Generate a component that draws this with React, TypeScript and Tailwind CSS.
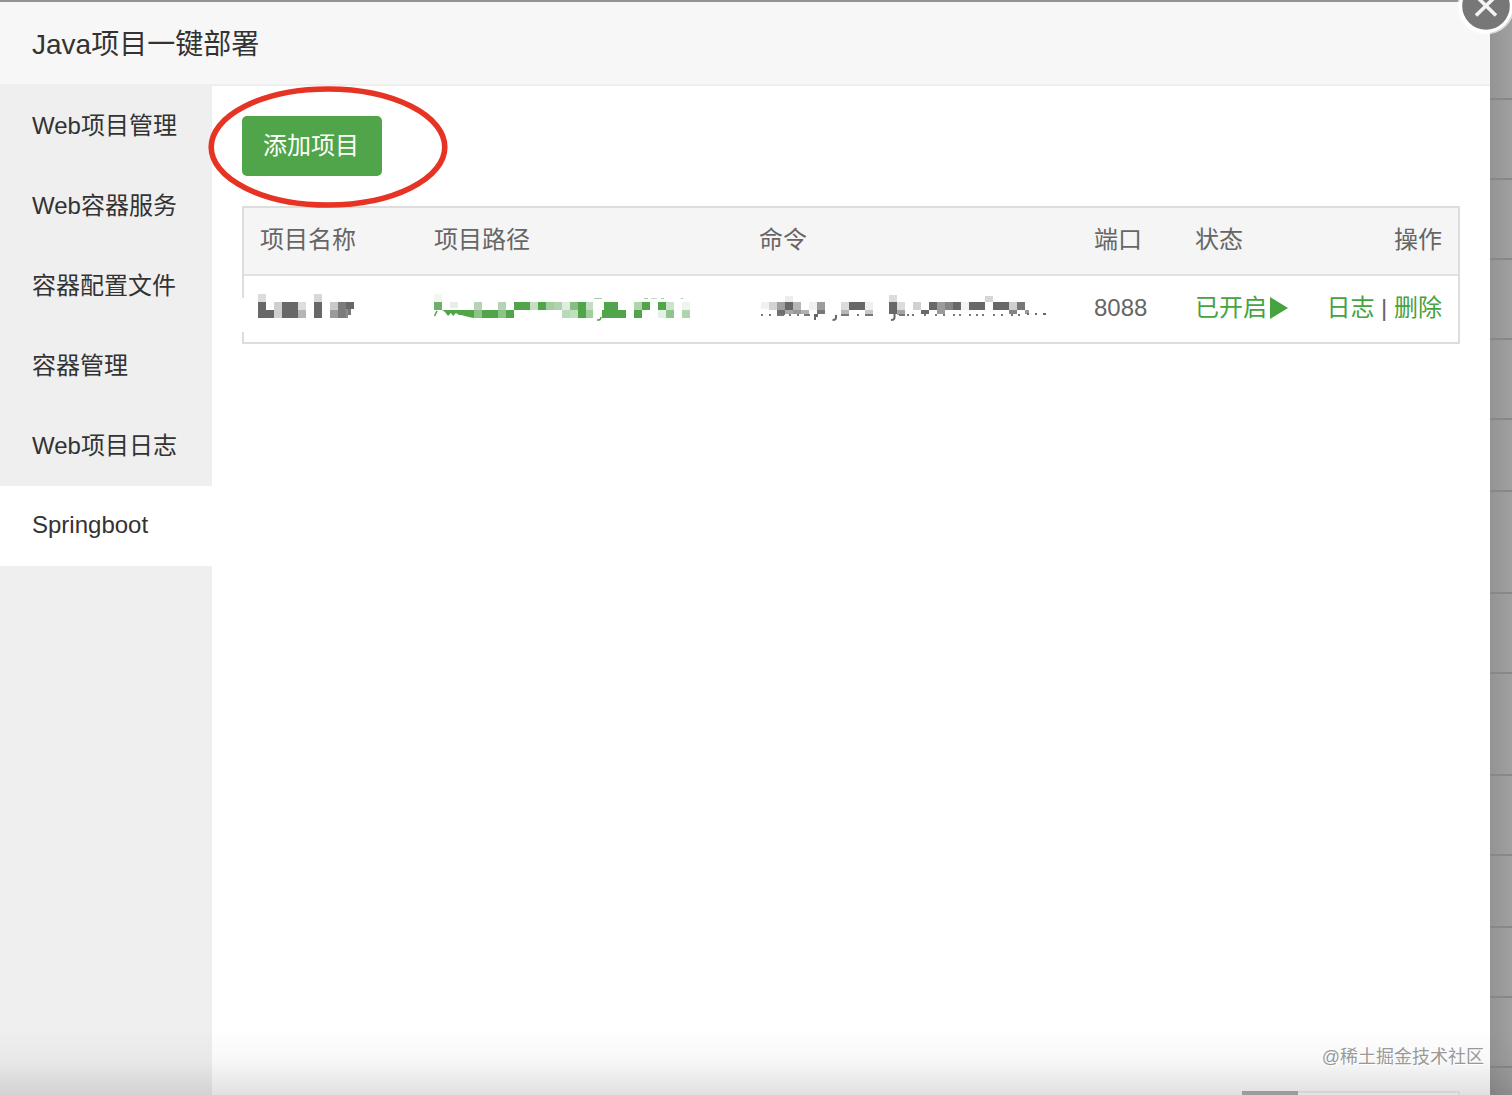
import React from "react";

type Cell = [x: number, y: number, w: number, h: number, fill: string];

const navItems = ["Web项目管理", "Web容器服务", "容器配置文件", "容器管理", "Web项目日志", "Springboot"];

const G = "#50a54a";
const D = "#686868";

/* Redacted values: coordinates are local to the 28px high cell drawing. */
const nameCells: Cell[] = [
  [0, 0, 8, 8, "#dcdcdc"], [0, 8, 8, 16, D], [8, 16, 8, 8, D], [16, 8, 8, 16, "#cfcfcf"],
  [24, 8, 16, 16, D], [40, 8, 8, 8, "#dedede"], [40, 16, 8, 8, "#b5b5b5"],
  [56, 0, 8, 8, "#d8d8d8"], [56, 8, 8, 16, D], [72, 8, 8, 8, "#c9c9c9"], [72, 16, 8, 8, "#9a9a9a"],
  [80, 8, 8, 16, "#7c7c7c"], [88, 8, 8, 7, D], [88, 15, 2, 9, "#8c8c8c"], [90, 15, 3, 6, "#777777"],
];

const pathCells: Cell[] = [
  [0, 0, 8, 8, "#f3f7f2"], [0, 8, 8, 8, "#6cb069"], [16, 8, 8, 6, "#e9efe8"],
  [40, 8, 8, 8, "#b7d3b5"], [40, 16, 8, 8, "#8cc488"], [48, 16, 16, 8, G],
  [64, 8, 8, 8, "#b7d3b5"], [64, 16, 8, 8, "#8cc488"], [72, 16, 8, 8, G],
  [80, 8, 16, 8, G], [96, 8, 8, 8, "#c6dfc3"], [104, 8, 8, 8, G], [112, 8, 8, 8, "#a3cea0"],
  [120, 8, 8, 8, "#b1d2af"], [128, 8, 8, 8, "#e0ecdf"], [128, 16, 8, 8, "#b9dab7"],
  [136, 8, 8, 8, "#86bd82"], [136, 16, 8, 8, "#c0dfbd"], [144, 8, 8, 16, G],
  [152, 8, 7, 8, "#c5ddc5"], [152, 16, 7, 8, "#9fd09b"],
  [170, 8, 14, 8, G], [168, 16, 24, 8, G],
  [160, 4, 8, 1, "#a6cca4"], [200, 8, 8, 8, "#b0d5ac"], [200, 16, 8, 8, G],
  [208, 8, 8, 8, G], [210, 4, 4, 1, "#a6cca4"], [217, 4, 6, 1, "#c2dcc1"], [227, 4, 3, 1, "#a6cca4"],
  [224, 8, 8, 8, G], [232, 8, 8, 8, "#cde2cb"], [232, 16, 8, 8, "#8fc48d"], [224, 16, 8, 8, "#e6f1e5"],
  [248, 8, 8, 8, "#eef4ee"], [248, 16, 8, 8, "#b0d5ac"], [247, 4, 2, 1, "#a6cca4"],
];

const commandCells: Cell[] = [
  [0, 8, 8, 7, "#f1f1f1"], [8, 8, 8, 8, "#d3d3d3"], [16, 8, 8, 8, "#a0a0a0"], [16, 16, 8, 5, "#707070"],
  [24, 2, 8, 6, "#ededed"], [24, 8, 8, 8, D], [24, 16, 8, 4, "#aaaaaa"], [32, 8, 8, 8, "#b6b6b6"],
  [32, 16, 8, 4, "#999999"], [40, 16, 8, 4, "#b0b0b0"], [48, 8, 8, 8, "#f0f0f0"],
  [56, 8, 8, 8, "#9c9c9c"], [56, 16, 8, 4, "#777777"], [53, 20, 2, 6, D], [55, 20, 2, 3, D],
  [80, 8, 8, 8, "#dcdcdc"], [80, 16, 8, 4, "#b7b7b7"],
  [88, 8, 16, 8, D], [104, 8, 8, 8, "#f0f0f0"], [104, 16, 8, 4, "#c8c8c8"],
  [128, 1, 8, 7, "#dcdcdc"], [128, 8, 8, 12, D],
  [136, 8, 8, 8, "#dcdcdc"], [136, 16, 8, 5, "#a5a5a5"], [152, 8, 8, 8, "#d1d1d1"],
  [160, 16, 8, 4, D], [168, 8, 8, 8, D], [176, 8, 8, 12, "#9b9b9b"], [184, 8, 8, 8, "#858585"],
  [192, 8, 8, 8, D], [200, 8, 8, 8, "#f4f4f4"], [208, 8, 16, 8, D], [224, 2, 8, 6, "#d6d6d6"],
  [232, 8, 16, 8, D], [248, 8, 8, 8, "#d0d0d0"], [248, 16, 8, 4, "#858585"], [256, 8, 8, 8, "#777777"],
  [264, 16, 4, 4, "#999999"],
  ...[0, 8, 28, 36, 96, 146, 151, 163, 174, 182, 192, 198, 208, 215, 221, 232, 240, 250, 257].map(
    (x): Cell => [x, 20, 2, 2, "#777777"],
  ),
  [16, 20, 7, 2, "#777777"], [43, 20, 6, 2, "#777777"], [80, 20, 8, 2, "#777777"],
  [104, 20, 8, 2, "#777777"], [138, 20, 6, 2, "#777777"],
  [266, 19, 2, 2, D], [274, 19, 2, 2, D], [282, 19, 3, 2, D],
];

function Mosaic({ cells, width, children }: { cells: Cell[]; width: number; children?: React.ReactNode }) {
  return (
    <svg width={width} height={28} className="block" aria-hidden="true">
      {cells.map(([x, y, w, h, fill], i) => (
        <rect key={i} x={x} y={y} width={w} height={h} fill={fill} shapeRendering="crispEdges" />
      ))}
      {children}
    </svg>
  );
}

const backdropRows = [
  "h-[100px]", "h-20", "h-20", "h-20", "h-20", "h-[72px]", "h-[102px]", "h-20",
  "h-[102px]", "h-20", "h-[72px]", "h-[70px]", "h-[70px]",
];

const columns = "grid grid-cols-[174px_325px_335px_101px_121px_1fr] pl-4 pr-4";

export default function App() {
  return (
    <div className="relative flex h-[1095px] w-[1512px] overflow-hidden bg-[#9c9c9c] font-['Liberation_Sans','Noto_Sans_CJK_SC',sans-serif] text-2xl text-[#333]">
      <div className="flex w-[1490px] flex-col border-t-2 border-[#949292] bg-white">
        <header className="flex h-[84px] shrink-0 items-center border-b-2 border-[#eee] bg-[#f7f7f7] pt-1 pl-8 text-[28px]">
          <h1>Java项目一键部署</h1>
        </header>
        <div className="flex flex-1">
          <nav className="-mt-0.5 w-[212px] shrink-0 bg-[#efefef] pt-0.5">
            {navItems.map((item) => (
              <div
                key={item}
                className={`flex h-20 items-center pl-8 whitespace-nowrap ${item === "Springboot" ? "bg-white pb-0.5" : ""}`}
              >
                {item}
              </div>
            ))}
          </nav>
          <main className="flex-1 pt-[30px] pr-[30px] pl-[30px]">
            <div className="relative z-10 w-[140px]">
              <button className="flex h-[60px] w-[140px] items-center justify-center rounded-[5px] bg-[#50a54a] pr-0.5 text-white">
                添加项目
              </button>
              <svg className="absolute -top-[30px] -left-[34px]" width="240" height="123" aria-hidden="true">
                <ellipse cx="120" cy="61" rx="116.8" ry="58" fill="none" stroke="#e63323" strokeWidth="5.6" />
              </svg>
            </div>
            <section className="relative mt-[30px] h-[138px] w-[1218px] border-2 border-[#ddd] text-[#666]">
              <div className={`${columns} h-[68px] items-center border-b-2 border-[#e2e2e2] bg-[#f5f5f5] pb-0.5`}>
                <span>项目名称</span>
                <span>项目路径</span>
                <span>命令</span>
                <span>端口</span>
                <span>状态</span>
                <span className="text-right">操作</span>
              </div>
              <div className={`${columns} h-[66px] items-center pb-0.5`}>
                <div className="-ml-0.5">
                  <Mosaic cells={nameCells} width={100} />
                </div>
                <div>
                  <Mosaic cells={pathCells} width={260}>
                    <path d="M8 16h32v8c-8-1-10-3-15-3l-3-2-3 3-2-3-3 3-3-4z" fill={G} />
                    <path d="M3 17l-2.5 5M167 23q0 3.5-4 3" fill="none" stroke={G} strokeWidth="1.6" />
                  </Mosaic>
                </div>
                <div className="pl-0.5">
                  <Mosaic cells={commandCells} width={290}>
                    <path d="M75 21v2.5q0 2.5-3.5 2.5M133.5 20v3.5q0 2.5-3.5 2.5" fill="none" stroke={D} strokeWidth="2" />
                  </Mosaic>
                </div>
                <span>8088</span>
                <span className="flex items-center text-[#46a33f]">
                  已开启
                  <svg width="18" height="22" className="ml-[3px]" aria-hidden="true">
                    <path d="M0 0L18 11L0 22Z" fill="#46a33f" />
                  </svg>
                </span>
                <span className="text-right whitespace-nowrap">
                  <a className="text-[#46a33f]">日志</a> | <a className="text-[#46a33f]">删除</a>
                </span>
              </div>
              <div className="absolute top-[90px] -left-0.5 h-[34px] w-1 bg-white" />
            </section>
          </main>
        </div>
      </div>
      <aside className="w-[22px] bg-linear-to-r from-[#949494] to-[#a0a0a0]">
        {backdropRows.map((height, i) => (
          <div key={i} className={`${height} border-b-2 border-[#888]`} />
        ))}
      </aside>
      <svg className="absolute top-0 right-0" width="56" height="40" aria-hidden="true">
        <circle cx="30" cy="6" r="28.5" fill="#fff" fillOpacity="0.6" />
        <circle cx="30" cy="6" r="27" fill="#fff" />
        <circle cx="30" cy="6" r="23.8" fill="#777" />
        <path d="M20 -4L40 15.5M40 -4L20 15.5" stroke="#f4f4f4" strokeWidth="3.6" />
      </svg>
      <div className="absolute bottom-0 left-0 h-[68px] w-full bg-linear-to-b from-black/0 via-black/3 to-black/12" />
      <div className="absolute right-[52px] bottom-0 flex h-1 w-[218px] border-t-2 border-r-2 border-[#d4d4d4] bg-[#e4e4e4]">
        <div className="-mt-0.5 h-1 w-14 bg-[#9c9c9c]" />
      </div>
      <div className="absolute top-[1044px] right-[28px] text-lg leading-[27px] whitespace-nowrap text-[#999] [text-shadow:1px_1px_0_white]">
        @稀土掘金技术社区
      </div>
    </div>
  );
}
